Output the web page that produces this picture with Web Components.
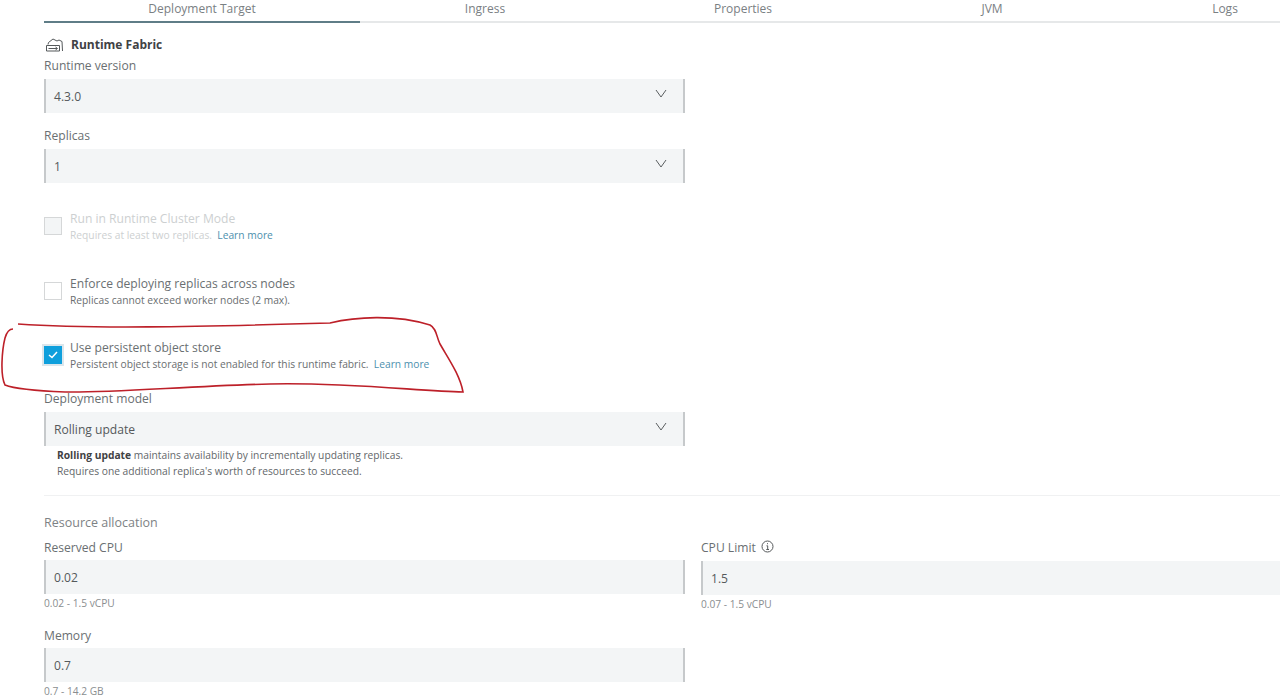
<!DOCTYPE html>
<html>
  <head>
    <meta charset="utf-8" />
    <style>
      html, body { margin: 0; height: 698px; overflow: hidden; background: #fff; }
      body { font-family: "Open Sans", sans-serif; color: #5c5c5c; }
      a { color: #4d90ae; text-decoration: none; }
    </style>
  </head>
  <body>
    <deploy-page>
      <tab-bar></tab-bar>
      <fabric-title>Runtime Fabric</fabric-title>

      <form-field label="Runtime version" style="--top: 3px"><select-box value="4.3.0"></select-box></form-field>
      <form-field label="Replicas" style="--top: 14px"><select-box value="1"></select-box></form-field>

      <check-row disabled style="--top: 27px">
        Run in Runtime Cluster Mode
        <span slot="sub">Requires at least two replicas.&nbsp; <a>Learn more</a></span>
      </check-row>
      <check-row style="--top: 34px">
        Enforce deploying replicas across nodes
        <span slot="sub">Replicas cannot exceed worker nodes (2 max).</span>
      </check-row>
      <check-row checked style="--top: 33px">
        Use persistent object store
        <span slot="sub">Persistent object storage is not enabled for this runtime fabric.&nbsp; <a>Learn more</a></span>
      </check-row>

      <form-field label="Deployment model" style="--top: 20px"><select-box value="Rolling update"></select-box></form-field>
      <help-note><b>Rolling update</b> maintains availability by incrementally updating replicas.<br />Requires one additional replica's worth of resources to succeed.</help-note>

      <resource-section heading="Resource allocation">
        <form-field label="Reserved CPU" hint="0.02 - 1.5 vCPU" style="--gap: 3px"><text-box value="0.02"></text-box></form-field>
        <form-field label="CPU Limit" info hint="0.07 - 1.5 vCPU" style="--gap: 4px"><text-box value="1.5"></text-box></form-field>
        <form-field label="Memory" hint="0.7 - 14.2 GB" style="--gap: 3px"><text-box value="0.7"></text-box></form-field>
      </resource-section>

      <red-scribble></red-scribble>
    </deploy-page>

    <script type="text/javascript">
      function define(name, html, init) {
        customElements.define(name, class extends HTMLElement {
          constructor() {
            super();
            this.attachShadow({ mode: 'open' });
            this.shadowRoot.innerHTML = html;
          }
          connectedCallback() {
            if (init) init(this, this.shadowRoot);
          }
        });
      }

      define('deploy-page', `
        <style>
          :host { display: block; position: relative; width: 1280px; height: 698px; overflow: hidden; padding-left: 44px; box-sizing: border-box; }
        </style>
        <slot></slot>`);

      define('tab-bar', `
        <style>
          :host { display: grid; grid-template-columns: 316px 250px 266px 232px 234px; width: 1298px; height: 23px; border-bottom: 2px solid #e6e8e9; box-sizing: border-box; font-size: 12px; color: #7a8083; line-height: 18px; }
          div { text-align: center; height: 23px; box-sizing: border-box; }
          .on { border-bottom: 2px solid #5f7d87; }
        </style>
        <div class="on">Deployment Target</div><div>Ingress</div><div>Properties</div><div>JVM</div><div>Logs</div>`);

      define('fabric-title', `
        <style>
          :host { display: flex; align-items: center; gap: 7px; margin: 12px 0 0 1px; height: 19px; font-size: 12px; font-weight: 700; color: #3f4244; }
          svg { display: block; }
        </style>
        <svg width="19" height="14" viewBox="0 0 19 14" fill="none" stroke="#55595b" stroke-width="1"><path d="M3 6.500 L3.500 4.500 L8 1 L12 3 L14 2 L17 3.500 L17.500 13 M1.500 7.500 H14.500 V13 H1.500 Z M3.500 10.500 H12 M10.500 9 L12.500 10.500 L10.500 12" /></svg>
        <span><slot></slot></span>`);

      define('form-field', `
        <style>
          :host { display: block; width: 641px; margin-top: var(--top, 0); }
          .label { font-size: 12.1px; line-height: 18px; height: 18px; color: #6a6f72; display: flex; align-items: center; gap: 5px; margin-bottom: var(--gap, 4px); }
          .hint { font-size: 10.2px; line-height: 14px; color: #8a8e90; margin-top: 2px; }
          svg { display: none; }
          .has-info svg { display: block; margin-top: -3px; }
        </style>
        <div class="label"><span id="l"></span><svg width="13" height="13" viewBox="0 0 13 13" fill="none" stroke="#55595b"><circle cx="6.500" cy="6.500" r="5.500" /><path d="M5.500 5.800 H6.700 V9.500 M5.300 9.500 H8 M6.500 3.200 V4.200" /></svg></div>
        <div><slot></slot></div>
        <div class="hint" id="h"></div>`, (el, root) => {
          root.getElementById('l').textContent = el.getAttribute('label');
          root.getElementById('h').textContent = el.getAttribute('hint') || '';
          if (!el.hasAttribute('hint')) root.getElementById('h').remove();
          if (el.hasAttribute('info')) root.querySelector('.label').classList.add('has-info');
        });

      const boxStyle = `
        :host { display: flex; align-items: center; justify-content: space-between; height: 34px; box-sizing: border-box; background: #f3f5f6; border-left: 2px solid #c6c9cb; border-right: 2px solid #c6c9cb; padding: 0 17px 0 8px; font-size: 12.1px; color: #55595b; }
      `;

      define('select-box', `
        <style>${boxStyle} svg { display: block; margin-top: -5px; margin-right: -1px; }</style>
        <span id="v"></span>
        <svg width="12" height="9" viewBox="0 0 12 9" fill="none" stroke="#5a5e60" stroke-width="1"><path d="M1 1 L6 8 L11 1" /></svg>`,
        (el, root) => { root.getElementById('v').textContent = el.getAttribute('value'); });

      define('text-box', `
        <style>${boxStyle}</style>
        <span id="v"></span>`,
        (el, root) => { root.getElementById('v').textContent = el.getAttribute('value'); });

      define('check-row', `
        <style>
          :host { display: flex; width: 641px; margin-top: var(--top, 0); color: #6a6f72; height: 31px; }
          .box { flex: none; width: 18px; height: 18px; box-sizing: border-box; border: 1px solid #d5d7d8; background: #fff; margin: 7px 8px 0 0; display: flex; align-items: center; justify-content: center; }
          .title { font-size: 12.1px; line-height: 17px; }
          .sub { font-size: 10.25px; line-height: 15px; margin-top: 1px; color: #6a6e70; }
          :host([disabled]) .box { background: #f3f5f6; }
          :host([disabled]) .title, :host([disabled]) .sub { color: #cdd0d1; }
          :host([checked]) .box { background: #0e9fdc; border: 0; outline: 2px solid #dbe6ec; }
          svg { display: none; }
          :host([checked]) svg { display: block; }
        </style>
        <div class="box"><svg width="10" height="8" viewBox="0 0 10 8" fill="none" stroke="#fff" stroke-width="1.500"><path d="M1 4 L4 6.500 L9 1" /></svg></div>
        <div>
          <div class="title"><slot></slot></div>
          <div class="sub"><slot name="sub"></slot></div>
        </div>`);

      define('help-note', `
        <style>
          :host { display: block; font-size: 10.25px; line-height: 16px; color: #63676a; margin: 1px 0 0 13px; }
          ::slotted(b) { color: #3f4244; }
        </style>
        <slot></slot>`);

      define('resource-section', `
        <style>
          :host { display: block; width: 1298px; margin-top: 16px; border-top: 1px solid #f0f1f2; }
          h3 { font-weight: 400; font-size: 12.5px; line-height: 18px; color: #7d8285; margin: 18px 0 7px; }
          .grid { display: grid; grid-template-columns: 641px 641px; column-gap: 16px; row-gap: 16px; }
        </style>
        <h3 id="t"></h3>
        <div class="grid"><slot></slot></div>`, (el, root) => {
          root.getElementById('t').textContent = el.getAttribute('heading');
        });

      define('red-scribble', `
        <style>
          :host { position: absolute; left: 0; top: 0; width: 1280px; height: 698px; pointer-events: none; }
        </style>
        <svg width="1280" height="698" viewBox="0 0 1280 698" fill="none" stroke="#bd2029" stroke-width="1.600">
          <path d="M18 324 C 90 329 190 327 330 323 C 355 317 395 314 430 325 C 437 329 436 336 440 344 C 448 358 460 375 463 392 C 420 391 340 382 270 384 C 190 386 110 393 65 392 C 40 391 15 389 5 385 C 0 375 2 350 5 338 C 7 331 10 329 13 329" />
        </svg>`);
    </script>
  </body>
</html>
